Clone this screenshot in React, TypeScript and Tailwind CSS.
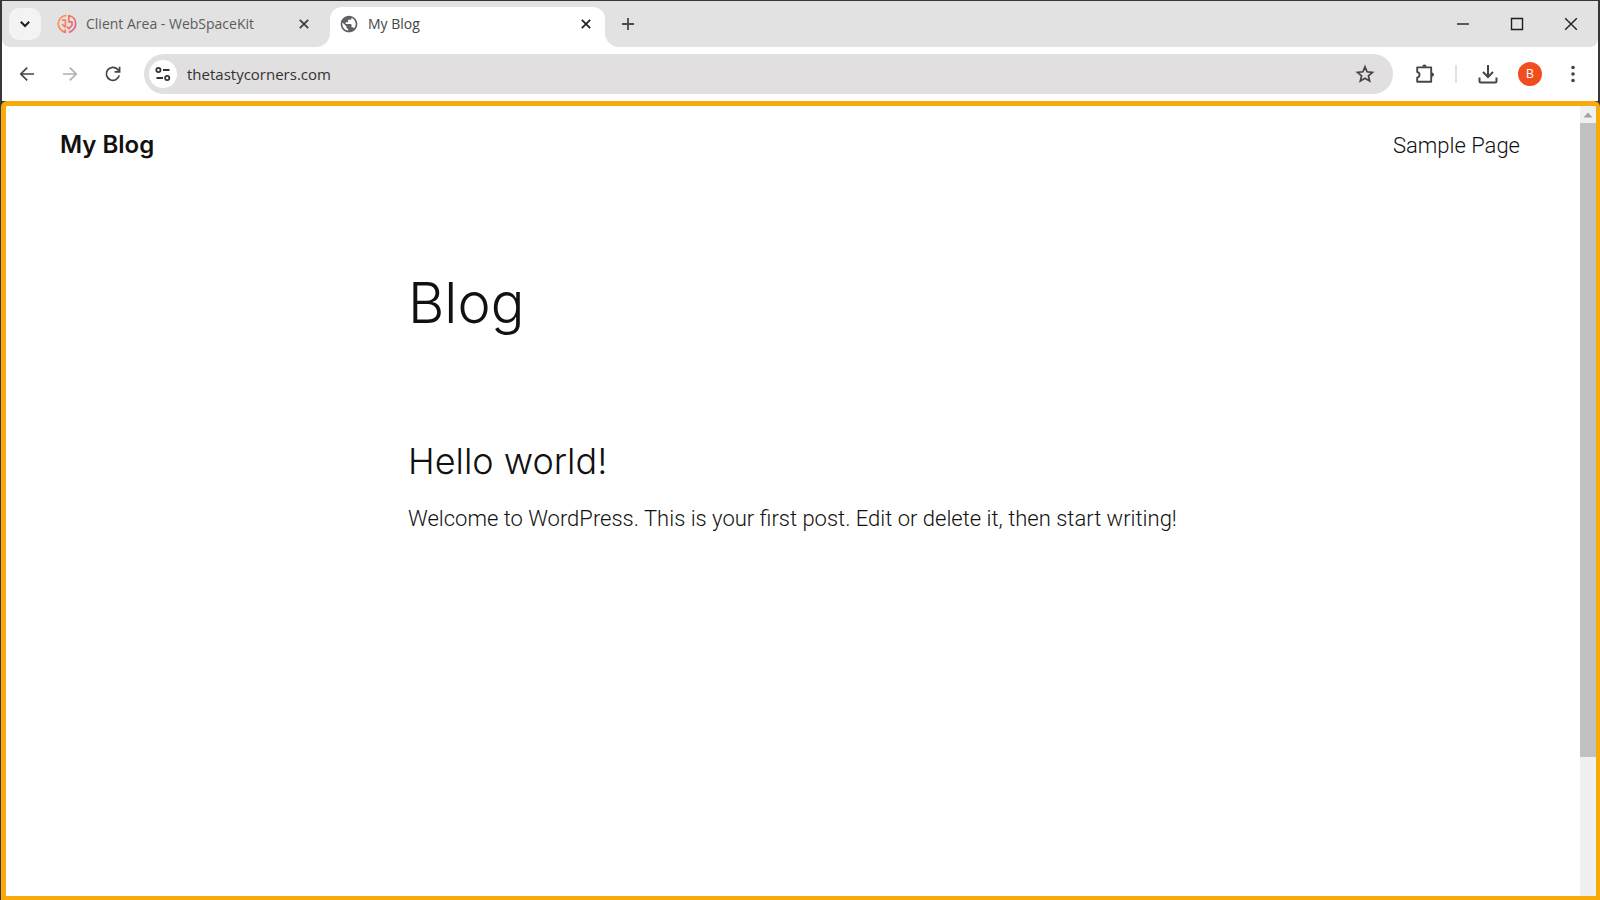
import React from "react";
import { MdPublic } from "react-icons/md";

function ArrowIcon({ flip = false }: { flip?: boolean }) {
  return (
    <svg viewBox="0 0 20 20" className={flip ? "size-5 rotate-180" : "size-5"} fill="none" stroke="currentColor" strokeWidth="1.7">
      <path d="M17 10H4M10.2 3.6 3.8 10l6.4 6.4" />
    </svg>
  );
}

function ReloadIcon() {
  return (
    <svg viewBox="0 0 20 20" className="size-5" fill="none" stroke="currentColor" strokeWidth="1.7">
      <path d="M16.2 11.4A6.5 6.5 0 1 1 14.6 5.4L16.4 7.4" />
      <path d="M16.6 2.8v5.1h-5" />
    </svg>
  );
}

function CloseIcon() {
  return (
    <svg viewBox="0 0 12 12" className="size-3" fill="none" stroke="currentColor" strokeWidth="1.7">
      <path d="m1.8 1.8 8.4 8.4M10.2 1.8l-8.4 8.4" />
    </svg>
  );
}

function BrandIcon() {
  return (
    <svg viewBox="0 0 20 20" className="size-5" fill="none" strokeWidth="1.7" strokeLinejoin="round">
      <defs>
        <linearGradient id="brand" gradientUnits="userSpaceOnUse" x1="1" y1="8" x2="19" y2="12">
          <stop offset="0" stopColor="#f9964e" />
          <stop offset="0.5" stopColor="#f4775f" />
          <stop offset="1" stopColor="#e8608b" />
        </linearGradient>
      </defs>
      <g stroke="url(#brand)">
        <path d="M9.4 1.5C4.6 1.5 1.3 5.3 1.3 9.8c0 4.2 3.2 7.2 6.900 8.600V15.400M4.800 6.200H8.400V13.200M5 10l3.400 3.400" />
        <path d="M11.800 18.400c3.900-1.400 6.900-4.400 6.900-8.600 0-4.100-2.700-7.500-6.900-8.300V7.800H15v3.600l-3.200 3.200-2-2" />
      </g>
    </svg>
  );
}

function TuneIcon() {
  return (
    <svg viewBox="0 0 18 18" className="size-[18px]" fill="none" stroke="currentColor" strokeWidth="1.8">
      <circle cx="4.4" cy="5" r="2.1" />
      <path d="M9 5h6.5M2.5 13H9" />
      <circle cx="13.2" cy="13" r="2.1" />
    </svg>
  );
}

function StarIcon() {
  return (
    <svg viewBox="0 0 20 20" className="size-5" fill="none" stroke="currentColor" strokeWidth="1.7">
      <path d="m10 2.8 2.1 5 5.4.5-4.1 3.5 1.25 5.3L10 14.3l-4.65 2.8 1.25-5.3-4.1-3.5 5.4-.5Z" />
    </svg>
  );
}

function PuzzleIcon() {
  return (
    <svg viewBox="0 0 22 22" className="size-[22px]">
      <path
        d="M3.200 4.400h14v14.300h-14v-4.100c1.500-.3 2.300-1.300 2.300-2.800s-.8-2.500-2.300-2.800Z"
        fill="none"
        stroke="currentColor"
        strokeWidth="1.900"
        strokeLinejoin="round"
      />
      <path d="M8.200 3.800a2.200 2.200 0 0 1 4.400 0ZM17.800 9.400a2.200 2.200 0 0 1 0 4.400Z" fill="currentColor" />
    </svg>
  );
}

function DownloadIcon() {
  return (
    <svg viewBox="0 0 22 22" className="size-[22px]" fill="none" stroke="currentColor" strokeWidth="2">
      <path d="M11 2v11.500M6 9l5 5 5-5M2.500 14.500V18q0 1.500 1.500 1.500h14q1.500 0 1.500-1.500v-3.500" />
    </svg>
  );
}

function TabStrip() {
  return (
    <div className="flex h-[46px] bg-white text-sm">
      <div className="flex w-[328px] items-center rounded-br-[14px] rounded-bl-lg bg-[#e2e2e2] pl-[7px]">
        <button aria-label="Search tabs" className="flex size-8 items-center justify-center rounded-[10px] bg-[#f3f3f3] text-[#1f1f1f]">
          <svg viewBox="0 0 12 12" className="size-3" fill="none" stroke="currentColor" strokeWidth="2">
            <path d="m1.800 3.800 4.200 4.200 4.200-4.200" />
          </svg>
        </button>
        <button className="ml-4 flex items-center gap-[9px] text-[#5c5c5c]">
          <BrandIcon />
          Client Area - WebSpaceKit
        </button>
        <button aria-label="Close Client Area tab" className="mr-5 ml-auto text-[#3c3c3c]">
          <CloseIcon />
        </button>
      </div>
      <div className="w-[275px] bg-[#e2e2e2] pt-[6px]">
        <div className="flex h-full items-center rounded-t-xl bg-white pr-[13px] pb-[6px] pl-[9px]">
          <button className="flex items-center gap-[9px] text-[#454545]">
            <MdPublic className="size-5 text-[#5f6165]" />
            My Blog
          </button>
          <button aria-label="Close My Blog tab" className="ml-auto text-[#1f1f1f]">
            <CloseIcon />
          </button>
        </div>
      </div>
      <div className="flex flex-1 items-center rounded-br-lg rounded-bl-[14px] bg-[#e2e2e2] pr-5 pl-4 text-[#1f1f1f]">
        <button aria-label="New tab" className="text-[#4a4a4a]">
          <svg viewBox="0 0 14 14" className="size-[14px]" fill="none" stroke="currentColor" strokeWidth="1.800">
            <path d="M7 1v12M1 7h12" />
          </svg>
        </button>
        <div className="ml-auto flex items-center gap-10">
          <button aria-label="Minimize">
            <svg viewBox="0 0 14 14" className="size-[14px]" fill="none" stroke="currentColor" strokeWidth="1.400">
              <path d="M1 7h12" />
            </svg>
          </button>
          <button aria-label="Maximize">
            <svg viewBox="0 0 14 14" className="size-[14px]" fill="none" stroke="currentColor" strokeWidth="1.400">
              <path d="M1.500 1.500h11v11h-11Z" />
            </svg>
          </button>
          <button aria-label="Close window">
            <svg viewBox="0 0 14 14" className="size-[14px]" fill="none" stroke="currentColor" strokeWidth="1.400">
              <path d="m1.200 1.200 11.600 11.600M12.800 1.200 1.200 12.800" />
            </svg>
          </button>
        </div>
      </div>
    </div>
  );
}

function Toolbar() {
  return (
    <div className="flex h-[54px] items-center bg-white pr-[15px] pl-[15px] text-[#454545]">
      <div className="flex w-[127px] items-center gap-[23px]">
        <button aria-label="Back">
          <ArrowIcon />
        </button>
        <button aria-label="Forward" className="text-[#b0b0b0]">
          <ArrowIcon flip />
        </button>
        <button aria-label="Reload">
          <ReloadIcon />
        </button>
      </div>
      <div className="flex h-10 flex-1 items-center rounded-full bg-[#e1dfe0] pr-[18px] pl-[5px]">
        <button aria-label="View site information" className="flex size-7 items-center justify-center rounded-full bg-white text-[#333]">
          <TuneIcon />
        </button>
        <input
          aria-label="Address"
          defaultValue="thetastycorners.com"
          className="ml-[10px] min-w-0 flex-1 bg-transparent text-[15px] text-[#333] outline-none"
        />
        <button aria-label="Bookmark this page">
          <StarIcon />
        </button>
      </div>
      <button aria-label="Extensions" className="ml-[21px]">
        <PuzzleIcon />
      </button>
      <span className="mr-5 ml-[19px] h-[18px] w-[2px] bg-[#e2e2e2]" />
      <button aria-label="Downloads">
        <DownloadIcon />
      </button>
      <button aria-label="Profile" className="ml-[19px] flex size-6 items-center justify-center rounded-full bg-[#f04e1e] font-['Liberation_Sans',sans-serif] text-xs text-white">
        B
      </button>
      <button aria-label="Menu" className="ml-[21px]">
        <svg viewBox="0 0 20 20" className="size-5" fill="currentColor">
          <circle cx="10" cy="3.500" r="1.800" />
          <circle cx="10" cy="10" r="1.800" />
          <circle cx="10" cy="16.500" r="1.800" />
        </svg>
      </button>
    </div>
  );
}

function BlogPage() {
  return (
    <div className="flex-1 font-[Inter,sans-serif] text-[#111]">
      <header className="flex h-[78px] items-center justify-between px-[54px]">
        <a href="#home" className="text-2xl font-semibold">
          My Blog
        </a>
        <nav className="pr-[6px]">
          <a href="#sample" className="font-[Roboto,sans-serif] text-[22px] font-light">
            Sample Page
          </a>
        </nav>
      </header>
      <main className="mx-auto max-w-[770px] pt-[85px]">
        <h1 className="text-[56px] leading-[68px] font-light">Blog</h1>
        <article className="pt-[98px]">
          <h2 className="text-[36px] leading-[52px] font-light">Hello world!</h2>
          <p className="pt-4 font-[Roboto,sans-serif] text-[22px] leading-8 font-light">
            Welcome to WordPress. This is your first post. Edit or delete it, then start writing!
          </p>
        </article>
      </main>
    </div>
  );
}

function Scrollbar() {
  return (
    <div aria-hidden="true" className="flex w-4 flex-col bg-[#f0f0f0]">
      <div className="flex h-[17px] items-center justify-center">
        <svg viewBox="0 0 10 6" className="h-[6px] w-[10px]" fill="#a3a3a3">
          <path d="M5 0.500 9.500 5.500h-9Z" />
        </svg>
      </div>
      <div className="flex flex-1 flex-col">
        <div className="flex-[82] bg-[#c1c1c1]" />
        <div className="flex-[18]" />
      </div>
    </div>
  );
}

export default function App() {
  return (
    <div className="flex min-h-screen flex-col bg-[#3a3637] font-['Open_Sans','Noto_Sans',sans-serif]">
      <div className="mx-[2px] mt-px">
        <TabStrip />
        <Toolbar />
      </div>
      <div className="ml-px flex flex-1 rounded-t-md border-[5px] border-r-4 border-b-4 border-[#f8aa0b] bg-white">
        <BlogPage />
        <Scrollbar />
      </div>
    </div>
  );
}
